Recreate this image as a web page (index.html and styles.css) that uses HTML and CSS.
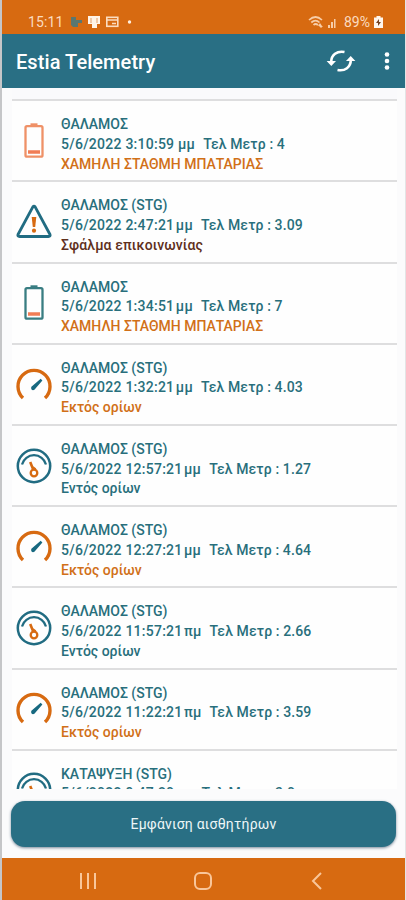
FILE: index.html
```
<!DOCTYPE html>
<html lang="el">
<head>
<meta charset="utf-8">
<meta name="viewport" content="width=device-width, initial-scale=1">
<title>Estia Telemetry</title>
<link rel="stylesheet" href="styles.css">
</head>
<body>
<svg class="defs" aria-hidden="true">
  <symbol id="battery" viewBox="0 0 36 36"><path class="frame" d="M11 3.200h14q1.500 0 1.500 1.500v27.500q0 1.500-1.500 1.500H11q-1.500 0-1.500-1.500v-27.500q0-1.500 1.500-1.500z"/><path class="frame cap" d="M14.500 1.800h7"/><path class="charge" d="M12 29h12"/></symbol>
  <symbol id="warning" viewBox="0 0 36 36"><path class="teal" stroke-width="2.800" stroke-linejoin="round" d="M17 2.700q1-1.200 2 0L34 30.500q.7 2-1.500 2H3.500q-2.200 0-1.500-2z"/><path class="orange-fill" d="M15.700 13h4.600l-1.100 10h-2.400z"/><circle class="orange-fill" cx="18" cy="26.700" r="2.100"/></symbol>
  <symbol id="gauge" viewBox="0 0 36 36"><path class="orange" stroke-width="3.400" d="M7 31A16 16 0 1 1 29 31"/><path class="teal-fill" d="m15.400 19.800 9.300-8 1.700 1.800-8 9.200q-2 .9-3-.6-.6-1.300 0-2.400z"/></symbol>
  <symbol id="dial" viewBox="0 0 36 36"><circle class="teal" stroke-width="2.500" cx="18" cy="18" r="16.200"/><path class="teal" stroke-width="2.300" d="M6 16.500A12.400 12.400 0 0 1 30 16.500"/><circle class="orange" stroke-width="2.300" cx="18" cy="25" r="3.300"/><path class="orange" stroke-width="2.600" d="M17.200 21.500 14.200 14M16.200 19l3.300 2.600"/></symbol>
</svg>
<div class="phone">
  <div class="status">
    <span class="clock">15:11</span>
    <svg class="notices" viewBox="0 0 66 16"><path fill="#5a7770" d="M1 3h5v3h6v3H8v4H3L1 11z"/><path fill="#fff4e8" d="M18 2h12v8h-3v4h-5v-4h-4z"/><path stroke="#e0a06b" d="M21 4v5M27 4v5"/><rect x="36.800" y="3.300" width="11" height="9" fill="none" stroke="#fbdcc0" stroke-width="1.600"/><path stroke="#fbdcc0" stroke-width="1.300" d="M36 6h12M42 9.500h4"/><circle cx="59.500" cy="8" r="1.700" fill="#ffeedd"/></svg>
    <svg class="signals" viewBox="0 0 31 16"><g fill="none" stroke="#f7cda8" stroke-width="1.700"><path d="M1 6Q7.500 0 14 6M3.300 8.500Q7.500 4.700 11.500 8.500M5.500 11Q7.500 9 10 11"/></g><path fill="#f7cda8" d="m12 9 2 3h-4zM13 14l-2-2h4zM20 11h2v3h-2zM23 8h2v6h-2zM26 5h1.500v9H26z"/></svg>
    <span class="percent">89%</span>
    <svg class="power" viewBox="0 0 9 14"><path fill="#fff5ec" d="M2.500 1h4v1.500H9V13H0V2.500h2.500z"/><path fill="#754222" d="M5 4 2 8h2v3l3-4H5z"/></svg>
  </div>
  <header class="bar">
    <h1>Estia Telemetry</h1>
    <svg class="refresh" viewBox="0 0 30 24"><g fill="none" stroke="#fff" stroke-width="2.600"><path d="M5.200 13C5.200 6 11 1.500 18.500 3M24.800 11c0 7-5.800 11.500-13.300 10"/></g><path fill="#fff" d="M.6 12h9.400l-4.700 5zM20 12h9.400l-4.700-5z"/></svg>
    <svg class="more" viewBox="0 0 6 18"><g fill="#fff"><circle cx="3" cy="2.500" r="2.300"/><circle cx="3" cy="9" r="2.300"/><circle cx="3" cy="15.500" r="2.300"/></g></svg>
  </header>
  <main class="list">
    <article class="row"><svg class="icon low"><use href="#battery"/></svg><div class="copy"><p>ΘΑΛΑΜΟΣ</p><p class="data">5/6/2022 3:10:59 μμ<span>Τελ Μετρ : 4</span></p><p class="alert">ΧΑΜΗΛΗ ΣΤΑΘΜΗ ΜΠΑΤΑΡΙΑΣ</p></div></article>
    <article class="row"><svg class="icon"><use href="#warning"/></svg><div class="copy"><p>ΘΑΛΑΜΟΣ (STG)</p><p class="data">5/6/2022 2:47:21<i></i>μμ<span>Τελ Μετρ : 3.09</span></p><p class="fault">Σφάλμα επικοινωνίας</p></div></article>
    <article class="row"><svg class="icon"><use href="#battery"/></svg><div class="copy"><p>ΘΑΛΑΜΟΣ</p><p class="data">5/6/2022 1:34:51<i></i>μμ<span>Τελ Μετρ : 7</span></p><p class="alert">ΧΑΜΗΛΗ ΣΤΑΘΜΗ ΜΠΑΤΑΡΙΑΣ</p></div></article>
    <article class="row"><svg class="icon"><use href="#gauge"/></svg><div class="copy"><p>ΘΑΛΑΜΟΣ (STG)</p><p class="data">5/6/2022 1:32:21<i></i>μμ<span>Τελ Μετρ : 4.03</span></p><p class="alert">Εκτός ορίων</p></div></article>
    <article class="row"><svg class="icon"><use href="#dial"/></svg><div class="copy"><p>ΘΑΛΑΜΟΣ (STG)</p><p class="data">5/6/2022 12:57:21<i></i>μμ<span>Τελ Μετρ : 1.27</span></p><p>Εντός ορίων</p></div></article>
    <article class="row"><svg class="icon"><use href="#gauge"/></svg><div class="copy"><p>ΘΑΛΑΜΟΣ (STG)</p><p class="data">5/6/2022 12:27:21<i></i>μμ<span>Τελ Μετρ : 4.64</span></p><p class="alert">Εκτός ορίων</p></div></article>
    <article class="row"><svg class="icon"><use href="#dial"/></svg><div class="copy"><p>ΘΑΛΑΜΟΣ (STG)</p><p class="data">5/6/2022 11:57:21<i></i>πμ<span>Τελ Μετρ : 2.66</span></p><p>Εντός ορίων</p></div></article>
    <article class="row"><svg class="icon"><use href="#gauge"/></svg><div class="copy"><p>ΘΑΛΑΜΟΣ (STG)</p><p class="data">5/6/2022 11:22:21<i></i>πμ<span>Τελ Μετρ : 3.59</span></p><p class="alert">Εκτός ορίων</p></div></article>
    <article class="row"><svg class="icon"><use href="#dial"/></svg><div class="copy"><p>ΚΑΤΑΨΥΞΗ (STG)</p><p class="data">5/6/2022 9:47:20<i></i>πμ<span>Τελ Μετρ : 3.0</span></p></div></article>
  </main>
  <button class="show">Εμφάνιση αισθητήρων</button>
  <nav class="nav">
    <svg viewBox="0 0 20 20"><path d="M3 2v16M10 2v16M17 2v16"/></svg>
    <svg viewBox="0 0 20 20"><rect x="2" y="2" width="16" height="16" rx="5"/></svg>
    <svg viewBox="0 0 20 20"><path d="m14 2-8 8 8 8"/></svg>
  </nav>
</div>
</body>
</html>
```
FILE: styles.css
```
* { box-sizing: border-box; }
body { margin: 0; font-family: Roboto, "Noto Sans", sans-serif; background: #fbfbfc; }
p, h1 { margin: 0; }
.defs { position: absolute; width: 0; height: 0; }
.phone { height: 900px; display: flex; flex-direction: column; overflow: hidden; border-left: 2px solid #c5c6c8; border-right: 1px solid #e3e4e5; }
.status { height: 34px; flex: none; background: #d76a11; display: flex; align-items: flex-start; padding: 14px 23px 0 28px; color: #fbdcc0; font-size: 14px; line-height: 17px; margin-left: -2px; margin-right: -1px; }
.clock { width: 42px; letter-spacing: .1px; }
.notices { width: 66px; height: 16px; }
.signals { width: 31px; height: 16px; margin-left: auto; }
.percent { width: 30px; margin-left: 5px; }
.power { width: 9px; height: 14px; margin-top: 1px; }
.bar { height: 54px; flex: none; background: #296f84; color: #fff; display: flex; align-items: center; padding: 0 16px 0 14px; margin-right: -1px; }
.bar h1 { font-size: 20px; font-weight: 500; line-height: 24px; letter-spacing: .07px; margin-top: 1px; }
.refresh { width: 30px; height: 24px; margin-left: auto; margin-right: 28px; }
.more { width: 6px; height: 18px; }
.list { height: 701px; flex: none; overflow: hidden; margin: 0 8px 0 10px; padding-top: 11.200px; background: linear-gradient(#fafafc 0 11px, #fefefe 11px); }
.row { height: 81.200px; display: flex; border-top: 2px solid #dededf; padding: 14px 0 0 4px; }
.icon { width: 36px; height: 36px; margin: 7.800px 9px 0 0; flex: none; fill: none; --frame: #397d82; }
.low { --frame: #ef9167; }
.frame { stroke: var(--frame); stroke-width: 2.300; }
.cap { stroke-width: 3; }
.charge { stroke: #f17d55; stroke-width: 3.500; }
.teal { stroke: #216c82; fill: none; }
.orange { stroke: #d76a11; fill: none; }
.teal-fill { fill: #176980; }
.orange-fill { fill: #d76a11; }
.copy { color: #286f7c; font-size: 14px; font-weight: 500; line-height: 19.700px; white-space: nowrap; }
.data { letter-spacing: .25px; }
.data span { margin-left: 8px; letter-spacing: .12px; }
.data i { display: inline-block; width: 1.500px; }
.alert { color: #d17018; }
.fault { color: #60301c; letter-spacing: .1px; }
.show { width: 385px; height: 46px; flex: none; margin: 12px 0 11px 9px; border: 0; border-radius: 14px; background: #296f84; color: #edf6f7; font: 400 14px Roboto, "Noto Sans", sans-serif; letter-spacing: .22px; box-shadow: 0 1px 3px #789; }
.nav { height: 42px; flex: none; background: #d76a11; display: flex; justify-content: space-between; align-items: center; padding: 4px 79px 0 78px; margin-left: -2px; margin-right: -1px; }
.nav svg { width: 20px; height: 20px; fill: none; stroke: #f9c69a; stroke-width: 2; }
```
